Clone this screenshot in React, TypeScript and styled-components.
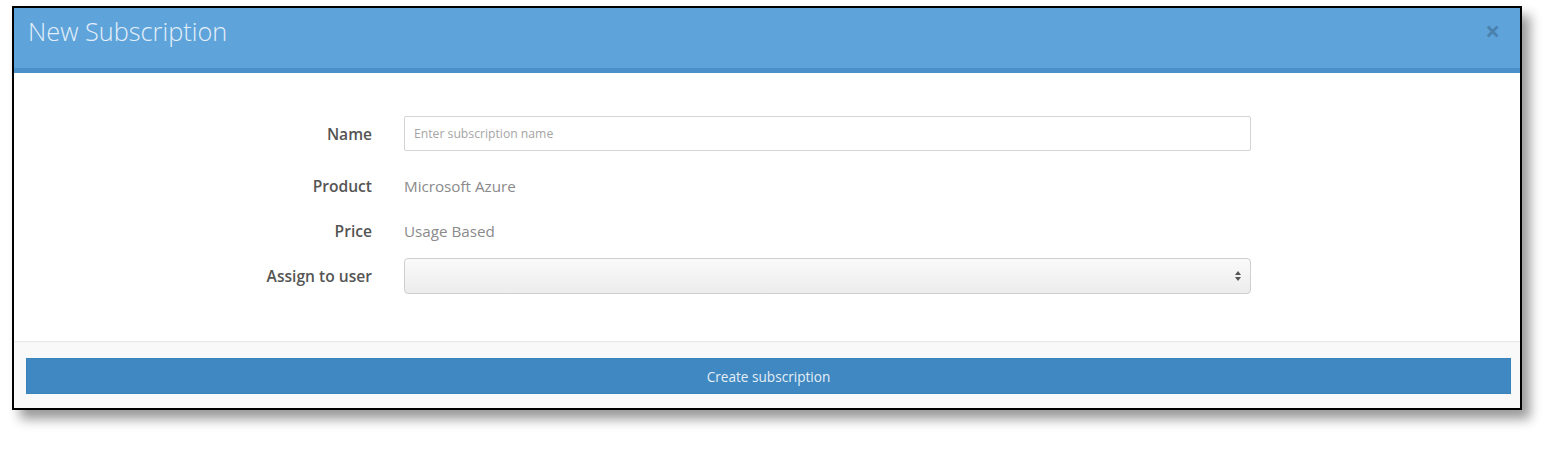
import styled, { createGlobalStyle } from "styled-components";

const GlobalStyle = createGlobalStyle`
  html, body {
    margin: 0;
    padding: 0;
    background: #fff;
    font-family: "Open Sans", "Liberation Sans", sans-serif;
  }
`;

interface Field {
  label: string;
  kind: "input" | "static" | "select";
  value?: string;
  gap: number;
}

const fields: Field[] = [
  { label: "Name", kind: "input", value: "Enter subscription name", gap: 0 },
  { label: "Product", kind: "static", value: "Microsoft Azure", gap: 18 },
  { label: "Price", kind: "static", value: "Usage Based", gap: 11 },
  { label: "Assign to user", kind: "select", gap: 10 },
];

export default function App() {
  return (
    <Page>
      <GlobalStyle />
      <Modal>
        <Header>
          <Title>New Subscription</Title>
          <Close aria-label="Close">×</Close>
        </Header>
        <Body>
          {fields.map((f) => (
            <Row key={f.label} $gap={f.gap}>
              <Label>{f.label}</Label>
              {f.kind === "input" ? (
                <TextInput placeholder={f.value} />
              ) : f.kind === "select" ? (
                <SelectBox>
                  <Arrows>
                    <svg width="6" height="10" viewBox="0 0 6 10">
                      <path d="M3 0 L6 4 L0 4 Z" fill="#555" />
                      <path d="M0 6 L6 6 L3 10 Z" fill="#555" />
                    </svg>
                  </Arrows>
                </SelectBox>
              ) : (
                <Static>{f.value}</Static>
              )}
            </Row>
          ))}
        </Body>
        <Footer>
          <PrimaryButton>Create subscription</PrimaryButton>
        </Footer>
      </Modal>
    </Page>
  );
}

const Page = styled.div`
  padding: 6px 0 0 12px;
  width: 1558px;
  height: 450px;
  box-sizing: border-box;
`;

const Modal = styled.div`
  width: 1510px;
  box-sizing: border-box;
  border: 2px solid #000;
  background: #fff;
  box-shadow: 8px 9px 11px rgba(0, 0, 0, 0.4);
`;

const Header = styled.div`
  display: flex;
  align-items: flex-start;
  justify-content: space-between;
  height: 65px;
  box-sizing: border-box;
  padding: 7px 20px 0 14px;
  background: #5ea3da;
  border-bottom: 5px solid #4b90c9;
`;

const Title = styled.h4`
  margin: 0;
  font-size: 25.3px;
  font-weight: 300;
  color: #e4eff9;
  line-height: 33px;
`;

const Close = styled.span`
  font-size: 26px;
  font-weight: 700;
  line-height: 33px;
  color: #000;
  opacity: 0.2;
`;

const Body = styled.div`
  padding: 43px 0 47px;
  display: flex;
  flex-direction: column;
`;

const Row = styled.div<{ $gap: number }>`
  display: grid;
  grid-template-columns: 358px 847px;
  column-gap: 32px;
  align-items: center;
  min-height: 34px;
  margin-top: ${({ $gap }) => $gap}px;
`;

const Label = styled.label`
  text-align: right;
  font-size: 15.6px;
  font-weight: 600;
  color: #555;
`;

const TextInput = styled.input`
  height: 35px;
  box-sizing: border-box;
  border: 1px solid #d5d5d5;
  border-radius: 2px;
  padding: 0 9px;
  font-family: "Open Sans", "Liberation Sans", sans-serif;
  font-size: 12.2px;
  color: #555;
  outline: none;

  &::placeholder {
    color: #a5a5a5;
  }
`;

const Static = styled.div`
  font-size: 15.2px;
  color: #8a8a8a;
`;

const SelectBox = styled.div`
  height: 36px;
  box-sizing: border-box;
  border: 1px solid #cfcfcf;
  border-radius: 4px;
  background: linear-gradient(#fafafa, #ececec);
  display: flex;
  align-items: center;
  justify-content: flex-end;
  padding-right: 9px;
`;

const Arrows = styled.span`
  display: flex;
`;

const Footer = styled.div`
  border-top: 1px solid #e7e7e7;
  background: #f9f9f9;
  padding: 16px 9px 14px 12px;
`;

const PrimaryButton = styled.button`
  display: block;
  width: 100%;
  height: 36px;
  border: 1px solid #3a82ba;
  background: #3f88c1;
  color: #e6eef7;
  font-family: "Open Sans", "Liberation Sans", sans-serif;
  font-size: 13.6px;
  cursor: pointer;
`;
